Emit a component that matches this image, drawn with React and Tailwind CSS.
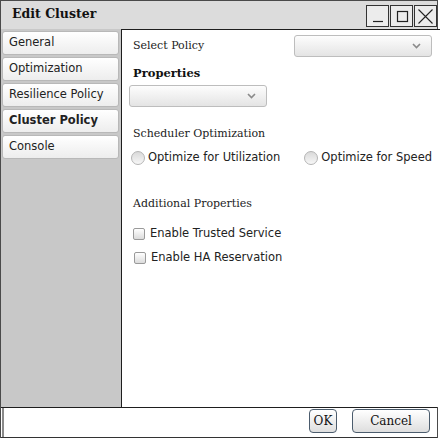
const sans = { fontFamily: '"DejaVu Sans", sans-serif' };
const serif = { fontFamily: '"DejaVu Serif", serif' };

function Chevron() {
  return (
    <svg width="9" height="6" viewBox="0 0 9 6" className="shrink-0">
      <path d="M1 1 L4.5 4.5 L8 1" fill="none" stroke="#8a8a8a" strokeWidth="1.6" />
    </svg>
  );
}

function Select({ className }) {
  return (
    <div className={`h-[22px] rounded-[3px] border border-[#bdbdbd] bg-linear-to-b from-[#fdfdfd] to-[#e4e4e4] flex items-center justify-end pr-[10px] ${className}`}>
      <Chevron />
    </div>
  );
}

function Radio({ label, className = '' }) {
  return (
    <label className={`flex items-center gap-[3px] ${className}`}>
      <span className="w-[14px] h-[14px] rounded-full border border-[#b5b5b5] bg-linear-to-b from-[#d9d9d9] to-[#f7f7f7] shrink-0" />
      <span className="text-[11.5px] text-[#222] whitespace-nowrap" style={sans}>{label}</span>
    </label>
  );
}

function Check({ label, className = '' }) {
  return (
    <label className={`flex items-center gap-[5px] ${className}`}>
      <span className="w-[12px] h-[12px] rounded-[2px] border border-[#9a9a9a] bg-linear-to-b from-white to-[#dcdcdc] shrink-0" />
      <span className="text-[11.5px] text-[#222] whitespace-nowrap" style={sans}>{label}</span>
    </label>
  );
}

function Tab({ label, active }) {
  return (
    <div
      className={`h-[24px] rounded-[3px] border border-[#b8b8b8] bg-linear-to-b from-white to-[#ededed] flex items-center pl-[6px] text-[11.5px] text-[#222] whitespace-nowrap ${active ? 'font-bold' : ''}`}
      style={sans}
    >
      {label}
    </div>
  );
}

function WinButton({ children }) {
  return (
    <div className="w-[23px] h-[22px] border border-[#333] bg-[#ececec] flex items-center justify-center">
      {children}
    </div>
  );
}

export default function App() {
  return (
    <div className="w-[440px] h-[438px] bg-white overflow-hidden">
      <div className="w-[438px] h-[438px] border-l border-t border-r border-[#4a4a4a] flex flex-col">
        {/* Title bar */}
        <div className="h-[28px] bg-[#dcdcdc] flex items-start justify-between pl-[11px] shrink-0">
          <div className="text-[12.5px] font-bold text-[#111] leading-[26px]" style={serif}>Edit Cluster</div>
          <div className="flex gap-[1px] pt-[4px]">
            <WinButton>
              <svg width="14" height="14" viewBox="0 0 14 14"><path d="M2 12.5 H12" stroke="#222" strokeWidth="1.2" /></svg>
            </WinButton>
            <WinButton>
              <svg width="14" height="14" viewBox="0 0 14 14"><rect x="2.5" y="2.5" width="10" height="10" fill="none" stroke="#222" strokeWidth="1.2" /></svg>
            </WinButton>
            <WinButton>
              <svg width="17" height="17" viewBox="0 0 17 17"><path d="M1.5 1.5 L15.5 15.5 M15.5 1.5 L1.5 15.5" stroke="#222" strokeWidth="1.1" /></svg>
            </WinButton>
          </div>
        </div>

        {/* Body */}
        <div className="flex flex-1 min-h-0">
          <div className="w-[120px] bg-[#c8c8c8] flex flex-col gap-[2px] pt-[2px] pl-[1px] pr-[2px] shrink-0">
            <Tab label="General" />
            <Tab label="Optimization" />
            <Tab label="Resilience Policy" />
            <Tab label="Cluster Policy" active />
            <Tab label="Console" />
          </div>
          <div className="flex-1 border-l border-t border-[#1e1e1e] bg-white flex flex-col pl-[11px] pr-[11px]">
            <div className="flex items-center justify-between mt-[5px]">
              <span className="text-[11px] text-[#222]" style={serif}>Select Policy</span>
              <Select className="w-[138px]" />
            </div>
            <div className="text-[11.5px] font-bold text-[#111] leading-[14px] mt-[9px]" style={serif}>Properties</div>
            <Select className="w-[138px] mt-[5px] -ml-[4px]" />
            <div className="text-[11px] text-[#222] leading-[14px] mt-[20px]" style={serif}>Scheduler Optimization</div>
            <div className="flex items-center mt-[9px] h-[16px] -ml-[2px]">
              <Radio label="Optimize for Utilization" />
              <Radio label="Optimize for Speed" className="ml-[24px]" />
            </div>
            <div className="text-[11px] text-[#222] leading-[14px] mt-[31px]" style={serif}>Additional Properties</div>
            <Check label="Enable Trusted Service" className="h-[16px] mt-[15px]" />
            <Check label="Enable HA Reservation" className="h-[16px] mt-[8px] ml-[1px]" />
          </div>
        </div>

        {/* Footer */}
        <div className="h-[31px] border-t border-[#1e1e1e] border-b border-b-[#333] flex shrink-0">
          <div className="flex-1 ml-[1px] border-l-2 border-[#8a8a8a] flex justify-end items-start pt-[1px] pr-[7px] gap-[15px]">
            <button className="w-[28px] h-[24px] rounded-[4px] border border-[#4b5c6d] bg-linear-to-b from-white to-[#dedede] text-[12px] text-[#111]" style={serif}>OK</button>
            <button className="w-[78px] h-[24px] rounded-[4px] border border-[#4b5c6d] bg-linear-to-b from-white to-[#dedede] text-[12px] text-[#111]" style={serif}>Cancel</button>
          </div>
        </div>
      </div>
    </div>
  );
}
